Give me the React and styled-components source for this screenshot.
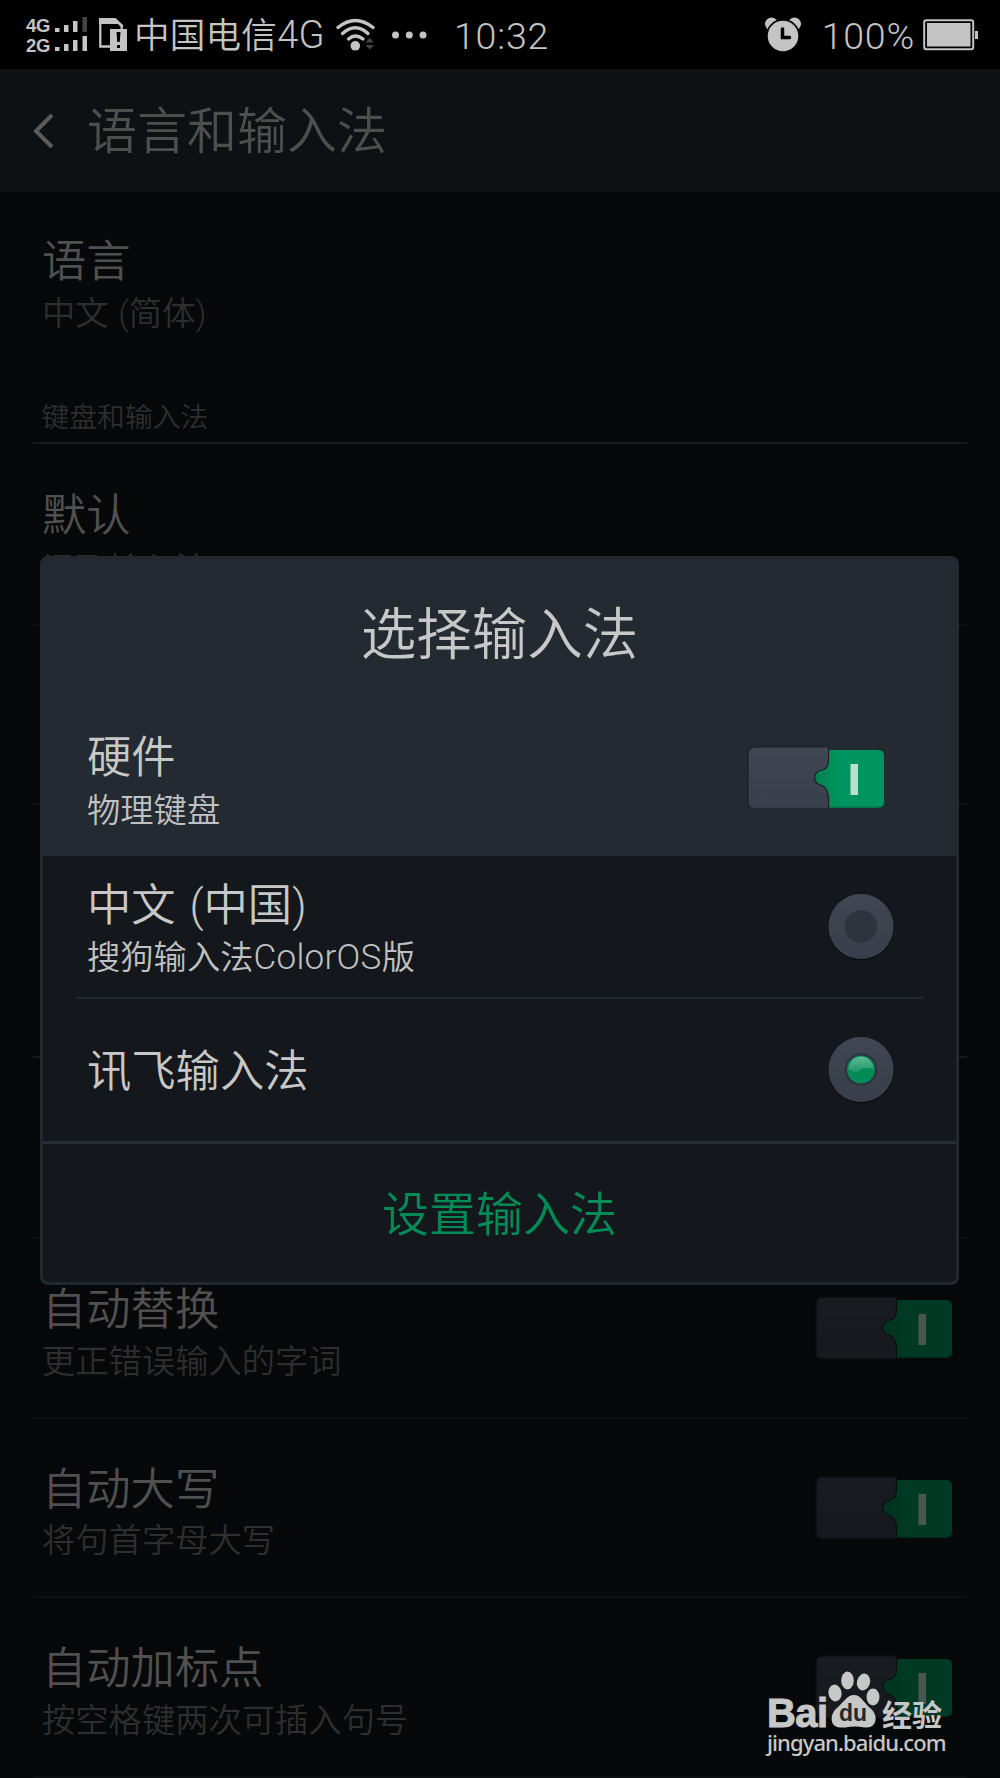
import React from "react";
import styled, { createGlobalStyle } from "styled-components";

const GlobalStyle = createGlobalStyle`
  *, *::before, *::after { box-sizing: border-box; }
  html, body { margin: 0; background: #060809; }
  body { font-family: Roboto, "Noto Sans CJK SC", sans-serif; font-weight: 350; }
  svg { display: block; flex: none; }
`;

const Screen = styled.div`
  position: relative;
  width: 1000px;
  height: 1778px;
  overflow: hidden;
  background: #060809;
`;

const StatusBar = styled.header`
  display: flex;
  align-items: center;
  height: 69px;
  padding: 0 21px 0 26px;
  background: #000;
  color: #c4c4c4;
`;

const NetworkLabels = styled.div`
  display: flex;
  flex-direction: column;
  flex: none;
  width: 28px;
  padding-top: 2px;
  font: 700 18.5px/19.3px "Liberation Sans", Arial, sans-serif;
  letter-spacing: -0.3px;
`;

const StatusIcon = styled.span`
  flex: none;
  margin-left: ${(p) => p.$before || 0}px;
`;

const Carrier = styled.span`
  flex: none;
  margin-left: 6px;
  padding-top: 1px;
  width: 202px;
  font-size: 35.6px;
  line-height: 40px;
  letter-spacing: 0.2px;
  white-space: nowrap;
`;

const StatusNumber = styled.span`
  font-size: 37.5px;
  font-weight: 300;
  line-height: 44px;
  letter-spacing: 0.8px;
  padding-top: 3px;
  white-space: nowrap;
  margin-left: ${(p) => p.$before || 0}px;
  margin-right: ${(p) => p.$after || 0}px;
`;

const Spacer = styled.div`
  flex: 1;
`;

const TitleBar = styled.div`
  display: flex;
  align-items: center;
  height: 123px;
  padding: 2px 0 0 33px;
  gap: 32px;
  background: #0d1113;
`;

const PageTitle = styled.h1`
  margin: 0;
  padding-top: 1px;
  font-size: 50px;
  line-height: 60px;
  font-weight: 350;
  color: #4d4e4e;
`;

const List = styled.main`
  display: flex;
  flex-direction: column;
  padding: 0 33px;
`;

const Row = styled.div`
  display: flex;
  justify-content: space-between;
  flex: none;
  height: ${(p) => p.$height || 179.6}px;
  padding: ${(p) => p.$top ?? 45}px 14px 0 9px;
  border-bottom: 2px solid ${(p) => (p.$line === false ? "transparent" : "#0d0f11")};
`;

const RowTitle = styled.div`
  font-size: 44.3px;
  line-height: 52px;
  word-spacing: 3px;
  color: ${(p) => p.$color || "#4f504f"};
  white-space: nowrap;
`;

const RowNote = styled.div`
  margin-top: ${(p) => p.$gap ?? 4.5}px;
  font-size: 33.3px;
  line-height: 42px;
  word-spacing: 1.5px;
  color: ${(p) => p.$color || "#2e2e2f"};
  white-space: nowrap;
`;

const Latin = styled.span`
  font-size: ${(p) => p.$size}px;
  letter-spacing: 0.3px;
`;

const SectionLabel = styled.div`
  display: flex;
  align-items: flex-start;
  flex: none;
  height: 73px;
  padding: 29px 9px 0 8.5px;
  border-bottom: 2px solid #171b1d;
  font-size: 27.8px;
  line-height: 36px;
  color: #2e2e2f;
`;

const RowSwitch = styled.div`
  padding-top: 12px;
  filter: brightness(0.39);
`;

const Dialog = styled.section`
  position: absolute;
  left: 40px;
  top: 556px;
  width: 919px;
  height: 729px;
  display: flex;
  flex-direction: column;
  border: 3px solid #222931;
  border-radius: 8px;
  background: #14171b;
  color: #c8c8c8;
  overflow: hidden;
`;

const DialogHead = styled.div`
  flex: none;
  height: 300px;
  margin: -3px -3px 0;
  border: 3px solid #2a323d;
  border-bottom-width: 0;
  border-radius: 8px 8px 0 0;
  background: #242a31;
`;

const DialogTitle = styled.h2`
  margin: 0;
  padding-top: 43px;
  font-size: 55.5px;
  line-height: 68px;
  font-weight: 350;
  text-align: center;
`;

const HardwareRow = styled.div`
  display: flex;
  justify-content: space-between;
  padding: 62px 71px 0 44px;
`;

const DialogSwitch = styled.div`
  padding-top: 14px;
`;

const Option = styled.div`
  display: flex;
  align-items: center;
  justify-content: space-between;
  flex: none;
  height: ${(p) => p.$height}px;
  margin: 0 33px;
  padding: 0 28px 0 11px;
  border-bottom: ${(p) => (p.$line ? "2px solid #22272b" : "none")};
`;

const OptionText = styled.div`
  padding-top: ${(p) => p.$top}px;
`;

const DialogButton = styled.button`
  flex: 1;
  border: 0;
  border-top: 3px solid #272d33;
  padding: 4px 0 0;
  background: none;
  font: inherit;
  font-size: 47px;
  line-height: 60px;
  color: #008b57;
`;

const Watermark = styled.div`
  position: absolute;
  left: 767px;
  top: 1670px;
  width: 190px;
  color: #c6c8c8;
`;

const LogoLine = styled.div`
  display: flex;
  align-items: flex-end;
  height: 58px;
`;

const LogoText = styled.span`
  width: 61px;
  font: 700 40px/32px "Liberation Sans", Arial, sans-serif;
  letter-spacing: -0.6px;
  margin-bottom: -1px;
  -webkit-text-stroke: 1px currentColor;
`;

const LogoCn = styled.span`
  margin: 0 0 0 2px;
  font: 700 30px/30px "Noto Sans CJK SC", sans-serif;
  white-space: nowrap;
`;

const Site = styled.div`
  font: 500 22px/28px "Noto Sans", sans-serif;
  letter-spacing: -0.9px;
  white-space: nowrap;
`;

function Switch() {
  return (
    <svg width="138" height="64" viewBox="0 0 138 64">
      <defs>
        <linearGradient id="plate" x1="0" y1="0" x2="0" y2="1">
          <stop offset="0" stopColor="#404652" />
          <stop offset="1" stopColor="#393e4b" />
        </linearGradient>
        <linearGradient id="green" x1="0" y1="0" x2="1" y2="0">
          <stop offset="0" stopColor="#00804f" />
          <stop offset="0.4" stopColor="#009560" />
        </linearGradient>
      </defs>
      <path d="M66 4H131Q137 4 137 10V55Q137 61.500 131 61.500H66Z" fill="url(#green)" />
      <path d="M80 61H131Q137 61 137 55" fill="none" stroke="#007c4f" strokeWidth="1.500" />
      <rect x="103.500" y="18" width="7.500" height="31" fill="#b8dfcf" />
      <path
        d="M8 1H81.500V11.500C81.500 19 80.500 22.500 75.500 24C65 25 65 38.500 75.500 39.500C80.500 43 81.500 47 81.500 52V63H8Q1 63 1 56V8Q1 1 8 1Z"
        fill="url(#plate)"
        stroke="#1a2025"
        strokeWidth="1.200"
      />
    </svg>
  );
}

function Radio({ checked }) {
  return (
    <svg width="68" height="70" viewBox="0 0 68 70">
      <defs>
        <linearGradient id="ring" x1="0" y1="0" x2="0" y2="1">
          <stop offset="0" stopColor="#414753" />
          <stop offset="0.6" stopColor="#3a424c" />
          <stop offset="1" stopColor="#3a3e4d" />
        </linearGradient>
        <linearGradient id="shine" x1="0" y1="0" x2="0" y2="1">
          <stop offset="0" stopColor="#63b795" />
          <stop offset="1" stopColor="#1d9966" />
        </linearGradient>
      </defs>
      <circle cx="34" cy="36" r="32.500" fill="#0c0f12" />
      <circle cx="34" cy="34.500" r="32.500" fill="url(#ring)" />
      <circle cx="34" cy="34.500" r="16.300" fill="#2e333e" />
      {checked && (
        <>
          <circle cx="34" cy="34.500" r="14" fill="#008a58" />
          <path d="M21.500 34A12.500 12.500 0 0 1 46.500 34Q34 31 31.500 36.500Q24 37.500 21.500 34Z" fill="url(#shine)" />
        </>
      )}
    </svg>
  );
}

function SignalBars() {
  return (
    <svg width="34" height="36" viewBox="0 0 34 36" fill="#c4c4c4">
      <path d="M1 11h4.500v4h-4.500zM10 8h4.500v7h-4.500zM19 4h4.500v11h-4.500z" />
      <path d="M28.500 0h4.500v15h-4.500z" fill="#444" />
      <path d="M1 30h4.500v4h-4.500zM10 27h4.500v7h-4.500zM19 23h4.500v11h-4.500zM28.500 19h4.500v15h-4.500z" />
    </svg>
  );
}

function SimAlert() {
  return (
    <svg width="29" height="34" viewBox="0 0 29 34">
      <path d="M1.300 2V28.500H12M16 1.500L22.700 8V12" fill="none" stroke="#c4c4c4" strokeWidth="2.300" />
      <path d="M0 0H16.500L24 7V9H22L19.500 6H0Z" fill="#c4c4c4" />
      <path d="M11 11H28V33H11Z" fill="#c4c4c4" />
      <path d="M17.500 14h4l-.8 10h-2.400zM18 27h3v3H18z" fill="#000" />
    </svg>
  );
}

function Wifi() {
  return (
    <svg width="40" height="34" viewBox="0 0 40 34">
      <g fill="none" stroke="#c4c4c4" strokeWidth="3.300" strokeLinecap="round">
        <path d="M2 9.500Q19.300 -4.500 37 9.500" />
        <path d="M6.500 15.500Q19.300 4 32 15.500" />
        <path d="M12.500 21Q19.300 15 27 21" />
      </g>
      <circle cx="19.300" cy="27.800" r="4.800" fill="#c4c4c4" />
      <path d="M29.500 24.500l4.300-4.500 4.200 4.500zM29.500 27h8.500l-4.200 4.500z" fill="#444" />
    </svg>
  );
}

function Overflow() {
  return (
    <svg width="38" height="10" viewBox="0 0 38 10" fill="#c4c4c4">
      <circle cx="5.500" cy="5" r="3.500" />
      <circle cx="19.300" cy="5" r="3.500" />
      <circle cx="33" cy="5" r="3.500" />
    </svg>
  );
}

function AlarmClock() {
  return (
    <svg width="38" height="36" viewBox="0 0 38 36">
      <circle cx="6.500" cy="7" r="6.500" fill="#c4c4c4" />
      <circle cx="29.500" cy="7" r="6.500" fill="#c4c4c4" />
      <circle cx="18" cy="19" r="17" fill="#000" />
      <circle cx="18" cy="19" r="15.300" fill="#c4c4c4" />
      <path d="M17.500 12V20.500H24.500" fill="none" stroke="#000" strokeWidth="3.500" strokeLinecap="round" />
    </svg>
  );
}

function Battery() {
  return (
    <svg width="56" height="32" viewBox="0 0 56 32">
      <rect x="1.200" y="1.200" width="49" height="29" rx="2" fill="none" stroke="#c4c4c4" strokeWidth="2" />
      <rect x="4" y="4" width="43.500" height="23.500" fill="#c4c4c4" />
      <rect x="52" y="12" width="3" height="8" fill="#c4c4c4" />
    </svg>
  );
}

function Paw() {
  return (
    <svg width="52" height="58" viewBox="0 0 52 58" fill="#c6c8c8">
      <ellipse cx="7" cy="23" rx="6.500" ry="8.500" transform="rotate(-10 7 23)" />
      <ellipse cx="19.500" cy="10.500" rx="6.300" ry="9" />
      <ellipse cx="35.500" cy="12" rx="6.500" ry="8.500" transform="rotate(15 35.500 12)" />
      <ellipse cx="45" cy="27" rx="6.500" ry="8.500" />
      <path d="M26 25C33 25 36 33 42 38C51 45 49 58 38 57.500C33 57 30 56.500 26 56.500C21 56.500 18 58 12 57.500C2 57 1 45 9 38C15 33 19 25 26 25Z" />
      <text x="25" y="50.500" textAnchor="middle" fontFamily="Liberation Sans, Arial, sans-serif" fontSize="23" fontWeight="700" fill="#24272b">du</text>
    </svg>
  );
}

const bottomRows = [
  ["自动替换", "更正错误输入的字词"],
  ["自动大写", "将句首字母大写"],
  ["自动加标点", "按空格键两次可插入句号"],
];

export default function App() {
  return (
    <>
      <GlobalStyle />
      <Screen>
        <StatusBar>
          <NetworkLabels>
            <span>4G</span>
            <span>2G</span>
          </NetworkLabels>
          <SignalBars />
          <StatusIcon $before={11}>
            <SimAlert />
          </StatusIcon>
          <Carrier>
            中国电信<Latin $size={38}>4G</Latin>
          </Carrier>
          <Wifi />
          <StatusIcon $before={14}>
            <Overflow />
          </StatusIcon>
          <StatusNumber $before={26}>10:32</StatusNumber>
          <Spacer />
          <AlarmClock />
          <StatusNumber $before={19} $after={8}>100%</StatusNumber>
          <Battery />
        </StatusBar>

        <TitleBar>
          <svg width="22" height="38" viewBox="0 0 22 38">
            <path d="M19 2L3 18L19 34" fill="none" stroke="#5b5c5b" strokeWidth="4" />
          </svg>
          <PageTitle>语言和输入法</PageTitle>
        </TitleBar>

        <List>
          <Row $height={179} $top={44} $line={false}>
            <div>
              <RowTitle>语言</RowTitle>
              <RowNote>中文 (简体)</RowNote>
            </div>
          </Row>
          <SectionLabel>键盘和输入法</SectionLabel>
          <Row $height={181.6} $top={46}>
            <div>
              <RowTitle>默认</RowTitle>
              <RowNote $gap={7}>讯飞输入法</RowNote>
            </div>
          </Row>
          <Row />
          <Row $line={false} />
          <SectionLabel />
          <Row $height={181.4} />
          {bottomRows.map(([title, note]) => (
            <Row key={title}>
              <div>
                <RowTitle>{title}</RowTitle>
                <RowNote>{note}</RowNote>
              </div>
              <RowSwitch>
                <Switch />
              </RowSwitch>
            </Row>
          ))}
        </List>

        <Dialog>
          <DialogHead>
            <DialogTitle>选择输入法</DialogTitle>
            <HardwareRow>
              <div>
                <RowTitle $color="#c8c8c8">硬件</RowTitle>
                <RowNote $gap={5.5} $color="#c0c1c2">物理键盘</RowNote>
              </div>
              <DialogSwitch>
                <Switch />
              </DialogSwitch>
            </HardwareRow>
          </DialogHead>
          <Option $height={143} $line>
            <OptionText $top={6}>
              <RowTitle $color="#c8c8c8">中文 (中国)</RowTitle>
              <RowNote $gap={5.5} $color="#c0c1c2">
                搜狗输入法<Latin $size={35}>ColorOS</Latin>版
              </RowNote>
            </OptionText>
            <Radio />
          </Option>
          <Option $height={142}>
            <OptionText $top={3}>
              <RowTitle $color="#c8c8c8">讯飞输入法</RowTitle>
            </OptionText>
            <Radio checked />
          </Option>
          <DialogButton>设置输入法</DialogButton>
        </Dialog>

        <Watermark>
          <LogoLine>
            <LogoText>Bai</LogoText>
            <Paw />
            <LogoCn>经验</LogoCn>
          </LogoLine>
          <Site>jingyan.baidu.com</Site>
        </Watermark>
      </Screen>
    </>
  );
}
